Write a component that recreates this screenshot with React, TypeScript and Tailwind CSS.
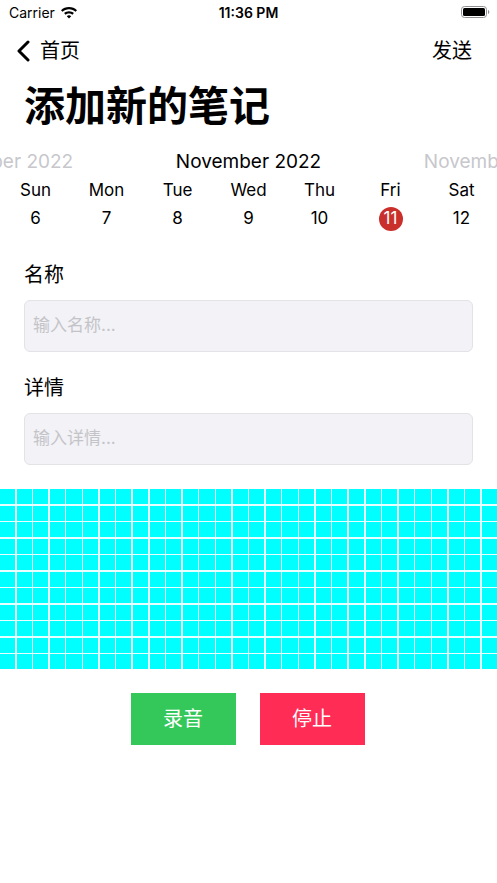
import React from "react";

const font = { fontFamily: '"Inter", "Noto Sans CJK SC", sans-serif' };

function Wifi() {
  return (
    <svg width="18" height="13" viewBox="0 0 18 13" fill="#000">
      <path d="M9 1C5.9 1 3.1 2.2 1 4.2l1.5 1.6C4.2 4.2 6.5 3.2 9 3.2s4.8 1 6.5 2.6L17 4.2C14.9 2.2 12.1 1 9 1z" />
      <path d="M9 5.2c-1.9 0-3.6.7-4.9 1.9l1.5 1.6C6.5 7.9 7.7 7.4 9 7.4s2.5.5 3.4 1.3l1.5-1.6C12.6 5.9 10.9 5.2 9 5.2z" />
      <path d="M9 9.3c-.8 0-1.6.3-2.2.9L9 12.6l2.2-2.4c-.6-.6-1.4-.9-2.2-.9z" />
    </svg>
  );
}

function Battery() {
  return (
    <svg width="29" height="12" viewBox="0 0 29 12">
      <rect x="0.5" y="0.5" width="25" height="11" rx="3" fill="none" stroke="#8e8e93" />
      <rect x="2" y="2" width="22" height="8" rx="1.5" fill="#000" />
      <path d="M27 4v4c.8-.3 1.3-1 1.3-2s-.5-1.7-1.3-2z" fill="#8e8e93" />
    </svg>
  );
}

const days = [
  ["Sun", "6"],
  ["Mon", "7"],
  ["Tue", "8"],
  ["Wed", "9"],
  ["Thu", "10"],
  ["Fri", "11"],
  ["Sat", "12"],
];

export default function App() {
  const cells = Array.from({ length: 30 * 11 });
  return (
    <div className="w-[497px] h-[883px] bg-white overflow-hidden text-black" style={font}>
      {/* Status bar */}
      <div className="h-[24px] flex items-center justify-between px-[9px] relative">
        <div className="flex items-center gap-[5px] text-[14px]">
          <span>Carrier</span>
          <Wifi />
        </div>
        <span className="absolute left-0 right-0 text-center text-[14px] font-semibold">11:36 PM</span>
        <div className="mr-[-2px]">
          <Battery />
        </div>
      </div>

      {/* Nav bar */}
      <div className="h-[53px] flex items-center justify-between pl-[16px] pr-[25px]">
        <div className="flex items-center gap-[10px]">
          <svg width="14" height="22" viewBox="0 0 14 22" fill="none">
            <path d="M12 2L3 11l9 9" stroke="#000" strokeWidth="3" strokeLinecap="round" strokeLinejoin="round" />
          </svg>
          <span className="text-[20px]">首页</span>
        </div>
        <span className="text-[20px]">发送</span>
      </div>

      {/* Large title */}
      <div className="h-[58px] flex items-center px-[24px]">
        <h1 className="text-[41px] font-bold leading-none">添加新的笔记</h1>
      </div>

      {/* Week calendar */}
      <div className="mt-[13px] h-[28px] flex justify-center items-center overflow-hidden text-[19px]">
        <span className="w-[248px] shrink-0 text-center text-[#c7c7cc]">November 2022</span>
        <span className="w-[248px] shrink-0 text-center">November 2022</span>
        <span className="w-[248px] shrink-0 text-center text-[#c7c7cc]">November 2022</span>
      </div>
      <div className="mt-[1px] grid grid-cols-7 h-[28px] items-center text-[17px]">
        {days.map(([d]) => (
          <span key={d} className="text-center">{d}</span>
        ))}
      </div>
      <div className="grid grid-cols-7 h-[28px] items-center text-[17px]">
        {days.map(([d, n]) => (
          <div key={d} className="flex justify-center">
            {n === "11" ? (
              <span className="w-[24px] h-[24px] rounded-full bg-[#c9302c] text-white flex items-center justify-center">
                {n}
              </span>
            ) : (
              <span>{n}</span>
            )}
          </div>
        ))}
      </div>

      {/* Form */}
      <div className="px-[24px]">
        <div className="mt-[28px] h-[28px] flex items-center text-[20px]">名称</div>
        <div className="mt-[11px] h-[52px] rounded-[6px] bg-[#f2f2f7] border border-[#e2e2e7] flex items-center px-[8px] text-[17px] text-[#c4c4c8]">
          输入名称...
        </div>
        <div className="mt-[22px] h-[28px] flex items-center text-[20px]">详情</div>
        <div className="mt-[11px] h-[52px] rounded-[6px] bg-[#f2f2f7] border border-[#e2e2e7] flex items-center px-[8px] text-[17px] text-[#c4c4c8]">
          输入详情...
        </div>
      </div>

      {/* Grid pad */}
      <div className="mt-[24px] h-[180px] grid grid-cols-[repeat(30,1fr)] grid-rows-[repeat(11,1fr)] gap-[1.5px] bg-[#e8ffff]">
        {cells.map((_, i) => (
          <div key={i} className="bg-[#00ffff]" />
        ))}
      </div>

      {/* Buttons */}
      <div className="mt-[24px] flex justify-center gap-[24px] pr-[2px]">
        <button className="w-[105px] h-[52px] bg-[#34c759] text-white text-[20px]">录音</button>
        <button className="w-[105px] h-[52px] bg-[#ff2d55] text-white text-[20px]">停止</button>
      </div>
    </div>
  );
}
